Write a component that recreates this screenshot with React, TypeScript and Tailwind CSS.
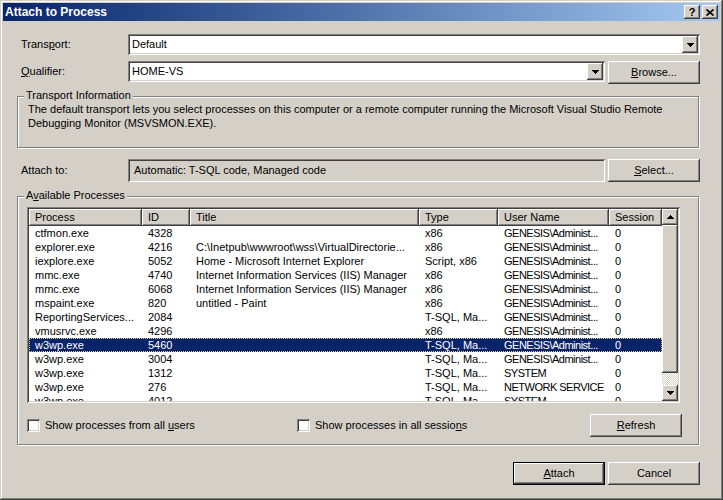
import React from "react";

const SUNKEN =
  "shadow-[inset_1px_1px_0_#808080,inset_-1px_-1px_0_#ffffff,inset_2px_2px_0_#404040,inset_-2px_-2px_0_#d4d0c8]";
const RAISED =
  "shadow-[inset_-1px_-1px_0_#404040,inset_1px_1px_0_#ffffff,inset_-2px_-2px_0_#808080,inset_2px_2px_0_#d4d0c8]";

function DownArrow() {
  return (
    <svg width="7" height="4" viewBox="0 0 7 4" shapeRendering="crispEdges">
      <path d="M0 0h7v1h-1v1h-1v1h-1v1h-1v-1h-1v-1h-1v-1h-1z" fill="#000" />
    </svg>
  );
}
function UpArrow() {
  return (
    <svg width="7" height="4" viewBox="0 0 7 4" shapeRendering="crispEdges">
      <path d="M0 4h7v-1h-1v-1h-1v-1h-1v-1h-1v1h-1v1h-1v1h-1z" fill="#000" />
    </svg>
  );
}

function Btn({ children, className }: { children: React.ReactNode; className?: string }) {
  return (
    <div
      className={`flex h-[23px] w-[92px] shrink-0 items-center justify-center bg-[#d4d0c8] ${RAISED} ${className ?? ""}`}
    >
      {children}
    </div>
  );
}

function Combo({ text, className }: { text: string; className: string }) {
  return (
    <div className={`flex h-[21px] shrink-0 bg-white p-[2px] ${SUNKEN} ${className}`}>
      <div className="flex flex-1 items-center pl-[2px] leading-[13px]">{text}</div>
      <div className={`flex h-[17px] w-[16px] items-center justify-center bg-[#d4d0c8] ${RAISED}`}>
        <DownArrow />
      </div>
    </div>
  );
}

function Check({ children }: { children: React.ReactNode }) {
  return (
    <div className="flex items-center">
      <div className={`h-[13px] w-[13px] bg-white ${SUNKEN}`} />
      <span className="ml-[5px] leading-[13px]">{children}</span>
    </div>
  );
}

const cols = [
  { name: "Process", w: "w-[113px]" },
  { name: "ID", w: "w-[48px]" },
  { name: "Title", w: "w-[229px]" },
  { name: "Type", w: "w-[79px]" },
  { name: "User Name", w: "w-[111px] tracking-[-0.5px]" },
  { name: "Session", w: "w-[53px]" },
];

const G = "GENESIS\\Administ...";
const rows: string[][] = [
  ["ctfmon.exe", "4328", "", "x86", G, "0"],
  ["explorer.exe", "4216", "C:\\Inetpub\\wwwroot\\wss\\VirtualDirectorie...", "x86", G, "0"],
  ["iexplore.exe", "5052", "Home - Microsoft Internet Explorer", "Script, x86", G, "0"],
  ["mmc.exe", "4740", "Internet Information Services (IIS) Manager", "x86", G, "0"],
  ["mmc.exe", "6068", "Internet Information Services (IIS) Manager", "x86", G, "0"],
  ["mspaint.exe", "820", "untitled - Paint", "x86", G, "0"],
  ["ReportingServices...", "2084", "", "T-SQL, Ma...", G, "0"],
  ["vmusrvc.exe", "4296", "", "x86", G, "0"],
  ["w3wp.exe", "5460", "", "T-SQL, Ma...", G, "0"],
  ["w3wp.exe", "3004", "", "T-SQL, Ma...", G, "0"],
  ["w3wp.exe", "1312", "", "T-SQL, Ma...", "SYSTEM", "0"],
  ["w3wp.exe", "276", "", "T-SQL, Ma...", "NETWORK SERVICE", "0"],
  ["w3wp.exe", "4012", "", "T-SQL, Ma...", "SYSTEM", "0"],
];

export default function App() {
  return (
    <div className="h-[500px] w-[723px] overflow-hidden bg-[#d4d0c8] p-[3px] font-['Liberation_Sans',Arial,sans-serif] text-[11px] leading-[13px] text-black shadow-[inset_-1px_-1px_0_#404040,inset_1px_1px_0_#d4d0c8,inset_-2px_-2px_0_#808080,inset_2px_2px_0_#ffffff]">
      {/* Title bar */}
      <div className="flex h-[18px] items-center bg-linear-to-r from-[#0a246a] to-[#a6caf0] pl-[2px] pr-[2px]">
        <span className="flex-1 text-[12px] font-bold text-white">Attach to Process</span>
        <div className={`flex h-[14px] w-[16px] items-center justify-center bg-[#d4d0c8] ${RAISED}`}>
          <span className="text-[11px] font-bold leading-[11px]">?</span>
        </div>
        <div className={`ml-[2px] flex h-[14px] w-[16px] items-center justify-center bg-[#d4d0c8] ${RAISED}`}>
          <svg width="8" height="7" viewBox="0 0 8 7">
            <path d="M0.5 0.5L7.5 6.5M7.5 0.5L0.5 6.5" stroke="#000" strokeWidth="1.6" />
          </svg>
        </div>
      </div>

      {/* Content */}
      <div className="flex flex-col pl-[14px]">
        {/* Transport */}
        <div className="mt-[13px] flex h-[21px] items-center">
          <div className="w-[111px] pl-[4px]">
            Trans<u>p</u>ort:
          </div>
          <Combo text="Default" className="w-[572px]" />
        </div>

        {/* Qualifier */}
        <div className="mt-[6px] flex h-[23px] items-start">
          <div className="flex h-[21px] w-[111px] items-center pl-[4px]">
            <span>
              <u>Q</u>ualifier:
            </span>
          </div>
          <Combo text="HOME-VS" className="w-[477px]" />
          <Btn className="ml-[3px]">
            <span>
              <u>B</u>rowse...
            </span>
          </Btn>
        </div>

        {/* Transport Information group */}
        <div className="relative mt-[12px] h-[52px] w-[682px] border border-[#808080] shadow-[1px_1px_0_#ffffff,inset_1px_1px_0_#ffffff]">
          <span className="absolute -top-[8px] left-[6px] bg-[#d4d0c8] px-[2px]">Transport Information</span>
          <div className="whitespace-nowrap pl-[10px] pt-[5px] leading-[14px]">
            The default transport lets you select processes on this computer or a remote computer running the Microsoft Visual Studio Remote
            <br />
            Debugging Monitor (MSVSMON.EXE).
          </div>
        </div>

        {/* Attach to */}
        <div className="mt-[11px] flex h-[23px] items-center">
          <div className="w-[111px] pl-[4px]">Attach to:</div>
          <div className={`flex h-[23px] w-[477px] items-center bg-[#d4d0c8] pl-[6px] ${SUNKEN}`}>
            Automatic: T-SQL code, Managed code
          </div>
          <Btn className="ml-[3px]">
            <span>
              <u>S</u>elect...
            </span>
          </Btn>
        </div>

        {/* Available Processes group */}
        <div className="relative mt-[14px] h-[249px] w-[682px] border border-[#808080] shadow-[1px_1px_0_#ffffff,inset_1px_1px_0_#ffffff]">
          <span className="absolute -top-[8px] left-[6px] bg-[#d4d0c8] px-[2px]">
            A<u>v</u>ailable Processes
          </span>

          {/* List view */}
          <div className={`ml-[9px] mt-[10px] flex h-[196px] w-[653px] bg-white p-[2px] ${SUNKEN}`}>
            <div className="flex w-[633px] flex-col overflow-hidden">
              <div className="flex h-[17px] shrink-0">
                {cols.map((c) => (
                  <div
                    key={c.name}
                    className={`flex h-[17px] shrink-0 items-center bg-[#d4d0c8] pl-[6px] tracking-normal ${c.w} ${RAISED}`}
                  >
                    {c.name}
                  </div>
                ))}
              </div>
              {rows.map((r, i) => {
                const sel = i === 8;
                return (
                  <div
                    key={i}
                    className={
                      sel
                        ? "flex h-[14px] shrink-0 bg-[#0a246a] text-white outline-1 outline-dotted -outline-offset-1 outline-[#d8d098]"
                        : "flex h-[14px] shrink-0"
                    }
                  >
                    {r.map((cell, j) => (
                      <div
                        key={j}
                        className={`shrink-0 overflow-hidden whitespace-nowrap pl-[6px] leading-[14px] ${cols[j].w}`}
                      >
                        {cell}
                      </div>
                    ))}
                  </div>
                );
              })}
            </div>
            {/* Scrollbar */}
            <div className="flex w-[16px] flex-col">
              <div className={`flex h-[16px] items-center justify-center bg-[#d4d0c8] ${RAISED}`}>
                <UpArrow />
              </div>
              <div className={`h-[148px] bg-[#d4d0c8] ${RAISED}`} />
              <div className="flex-1 bg-[conic-gradient(#ffffff_25%,#d4d0c8_0_50%,#ffffff_0_75%,#d4d0c8_0)] bg-[length:2px_2px]" />
              <div className={`flex h-[16px] items-center justify-center bg-[#d4d0c8] ${RAISED}`}>
                <DownArrow />
              </div>
            </div>
          </div>

          {/* Checkbox row */}
          <div className="ml-[9px] mt-[11px] flex h-[23px] items-center">
            <div className="w-[270px]">
              <Check>
                Show processes from all <u>u</u>sers
              </Check>
            </div>
            <div className="w-[293px]">
              <Check>
                Show processes in all sessio<u>n</u>s
              </Check>
            </div>
            <Btn>
              <span>
                <u>R</u>efresh
              </span>
            </Btn>
          </div>
        </div>

        {/* Bottom buttons */}
        <div className="mt-[17px] flex w-[683px] justify-end">
          <div className="flex h-[23px] w-[92px] border border-black bg-[#d4d0c8]">
            <div className={`flex flex-1 items-center justify-center ${RAISED}`}>
              <span>
                <u>A</u>ttach
              </span>
            </div>
          </div>
          <Btn className="ml-[3px]">Cancel</Btn>
        </div>
      </div>
    </div>
  );
}
